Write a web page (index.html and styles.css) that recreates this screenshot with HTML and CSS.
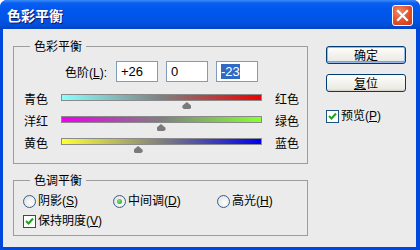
FILE: index.html
```html
<!DOCTYPE html>
<html lang="zh-CN">
<head>
<meta charset="utf-8">
<title>色彩平衡</title>
<link rel="stylesheet" href="styles.css">
</head>
<body>
<div class="window">
  <div class="titlebar">
    <span class="title">色彩平衡</span>
    <span class="close">
      <svg width="13" height="13" viewBox="0 0 13 13"><path d="M2 2 L11 11 M11 2 L2 11" stroke="#fff" stroke-width="2.2" stroke-linecap="square"/></svg>
    </span>
  </div>
  <div class="client">
    <div class="left">
      <div class="group group-color">
        <span class="legend">色彩平衡</span>
        <div class="levels">
          <span class="levels-label">色阶(<u>L</u>):</span>
          <span class="field">+26</span>
          <span class="field">0</span>
          <span class="field"><span class="sel">-23</span></span>
        </div>
        <div class="slider-row first">
          <span class="lbl">青色</span>
          <span class="track t-cr"><span class="thumb" style="left:63%"></span></span>
          <span class="lbl">红色</span>
        </div>
        <div class="slider-row">
          <span class="lbl">洋红</span>
          <span class="track t-mg"><span class="thumb" style="left:50%"></span></span>
          <span class="lbl">绿色</span>
        </div>
        <div class="slider-row">
          <span class="lbl">黄色</span>
          <span class="track t-yb"><span class="thumb" style="left:38.5%"></span></span>
          <span class="lbl">蓝色</span>
        </div>
      </div>
      <div class="group group-tone">
        <span class="legend">色调平衡</span>
        <div class="radios">
          <span class="opt"><span class="radio"></span>阴影(<u>S</u>)</span>
          <span class="opt"><span class="radio on"></span>中间调(<u>D</u>)</span>
          <span class="opt"><span class="radio"></span>高光(<u>H</u>)</span>
        </div>
        <div class="check-row">
          <span class="opt"><span class="check"><svg width="11" height="11" viewBox="0 0 11 11"><path d="M2 5 L4.5 7.5 L9 2.5" fill="none" stroke="#21a121" stroke-width="2"/></svg></span>保持明度(<u>V</u>)</span>
        </div>
      </div>
    </div>
    <div class="right">
      <button class="btn default">确定</button>
      <button class="btn"><u>复</u>位</button>
      <div class="preview">
        <span class="opt"><span class="check"><svg width="11" height="11" viewBox="0 0 11 11"><path d="M2 5 L4.5 7.5 L9 2.5" fill="none" stroke="#21a121" stroke-width="2"/></svg></span>预览(<u>P</u>)</span>
      </div>
    </div>
  </div>
</div>
</body>
</html>
```
FILE: styles.css
```css
html, body {
  margin: 0;
  padding: 0;
  background: #ffffff;
}
body {
  font-family: "Liberation Sans", "Noto Sans CJK SC", sans-serif;
  font-size: 12px;
  color: #000;
}
.window {
  width: 420px;
  height: 250px;
  display: flex;
  flex-direction: column;
  background: #0048dc;
  border-radius: 7px 7px 0 0;
  overflow: hidden;
  box-sizing: border-box;
}
.titlebar {
  height: 29px;
  flex: none;
  display: flex;
  align-items: center;
  justify-content: space-between;
  padding: 0 7px 0 7px;
  background: linear-gradient(to bottom, #3c8cf6 0px, #0a5ff0 3px, #0058ee 8px, #0055e8 18px, #004ed8 25px, #0044c8 29px);
}
.title {
  font-family: "Noto Sans CJK SC", sans-serif;
  font-weight: bold;
  font-size: 14px;
  line-height: 16px;
  color: #fff;
  text-shadow: 1px 1px 0 #0a1a70;
}
.close {
  width: 19px;
  height: 19px;
  margin-top: 2px;
  border: 1px solid #fff;
  border-radius: 3px;
  background: radial-gradient(circle at 35% 30%, #f08a6a 0, #e0502a 55%, #c8391a 100%);
  display: flex;
  align-items: center;
  justify-content: center;
}
.client {
  flex: 1;
  margin: 0 4px 3px 3px;
  background: #ebebeb;
  display: flex;
  padding-left: 10px;
}
.left {
  width: 295px;
  flex: none;
}
.group {
  border: 1px solid #9c9c9c;
  box-sizing: border-box;
}
.legend {
  display: table;
  margin: -8px 0 0 16px;
  padding: 0 4px;
  line-height: 14px;
  height: 14px;
  background: #ebebeb;
  font-family: "Noto Sans CJK SC", sans-serif;
}
.group-color {
  margin-top: 17px;
  height: 118px;
}
.levels {
  display: flex;
  align-items: center;
  margin-top: 8px;
  height: 21px;
  gap: 8px;
}
.levels-label {
  width: 93px;
  text-align: right;
  margin-right: 1px;
}
.field {
  width: 42px;
  height: 21px;
  box-sizing: border-box;
  border: 1px solid #7f9db9;
  background: #fff;
  font-family: "Liberation Sans", sans-serif;
  font-size: 13px;
  line-height: 19px;
  padding-left: 4px;
}
.sel {
  background: #316ac5;
  color: #fff;
}
.slider-row {
  display: grid;
  grid-template-columns: 24px 201px auto;
  column-gap: 13px;
  height: 22px;
  padding-left: 10px;
}
.slider-row.first {
  margin-top: 6px;
}
.lbl {
  line-height: 22px;
  white-space: nowrap;
  font-family: "Noto Sans CJK SC", sans-serif;
}
.track {
  position: relative;
  height: 7px;
  margin-top: 6px;
  box-sizing: border-box;
  border: 1px solid #8a8a8a;
}
.t-cr { background: linear-gradient(to right, #88ffff, #7f7f7f 50%, #ee0000); }
.t-mg { background: linear-gradient(to right, #ee00ee, #7f7f7f 50%, #88ff33); }
.t-yb { background: linear-gradient(to right, #ffff33, #7f7f7f 50%, #0000ee); }
.thumb {
  position: absolute;
  top: 7px;
  width: 9px;
  height: 7px;
  margin-left: -5px;
  background: #7a7a7a;
  clip-path: polygon(50% 0, 100% 55%, 100% 80%, 85% 100%, 15% 100%, 0 80%, 0 55%);
}
.group-tone {
  margin-top: 16px;
  height: 56px;
}
.radios {
  display: grid;
  grid-template-columns: 90px 104px auto;
  padding-left: 9px;
  margin-top: 6px;
  height: 16px;
  align-items: center;
}
.opt {
  display: flex;
  align-items: center;
  line-height: 16px;
  white-space: nowrap;
  font-family: "Liberation Sans", "Noto Sans CJK SC", sans-serif;
}
.radio {
  width: 13px;
  height: 13px;
  box-sizing: border-box;
  border-radius: 50%;
  border: 1px solid #3a5f8a;
  background: radial-gradient(circle at 60% 60%, #ffffff 0, #e6e6e0 70%, #cfcfc8 100%);
  margin-right: 2px;
  display: flex;
  align-items: center;
  justify-content: center;
}
.radio.on::after {
  content: "";
  width: 5px;
  height: 5px;
  border-radius: 50%;
  background: radial-gradient(circle at 40% 40%, #7ee07e, #1e9a1e);
}
.check-row {
  padding-left: 9px;
  margin-top: 4px;
  height: 16px;
}
.check {
  width: 13px;
  height: 13px;
  box-sizing: border-box;
  border: 1px solid #1c5180;
  background: #fff;
  margin-right: 2px;
  display: flex;
  align-items: center;
  justify-content: center;
}
.right {
  margin-left: 18px;
  padding-top: 17px;
  display: flex;
  flex-direction: column;
  width: 80px;
}
.btn {
  width: 80px;
  height: 18px;
  padding: 0;
  box-sizing: border-box;
  border: 1px solid #003c74;
  border-radius: 3px;
  background: linear-gradient(to bottom, #ffffff 0, #f4f4f0 40%, #ecebe6 85%, #d6d0c5 100%);
  font-family: "Noto Sans CJK SC", sans-serif;
  font-size: 12px;
  line-height: 16px;
  color: #000;
}
.btn.default {
  box-shadow: inset 0 0 0 1px #98b8ea, inset 0 -1px 0 1px #7aa0e0;
}
.btn + .btn {
  margin-top: 10px;
}
.preview {
  margin-top: 16px;
  height: 16px;
}
u {
  text-decoration: underline;
  text-underline-offset: 1px;
}
```
